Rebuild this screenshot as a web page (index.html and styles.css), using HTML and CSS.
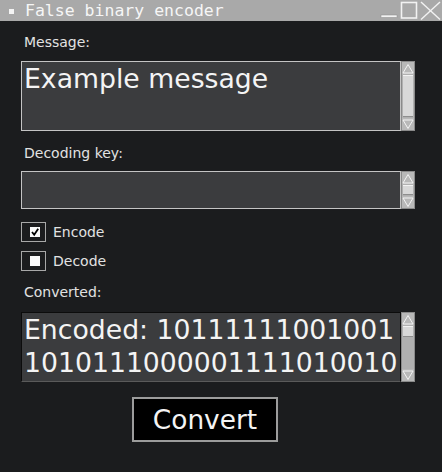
FILE: index.html
```html
<!DOCTYPE html>
<html>
<head>
<meta charset="utf-8">
<link rel="stylesheet" href="styles.css">
</head>
<body>
<div class="window">
  <div class="titlebar">
    <span class="bullet"></span>
    <span class="title">False binary encoder</span>
    <svg class="controls" width="62" height="21" viewBox="0 0 62 21">
      <rect x="1" y="15" width="16" height="2.5" fill="#f2f2f2" stroke="#8a8a8a" stroke-width="0.5"/>
      <rect x="21.5" y="2.5" width="15" height="15.5" fill="none" stroke="#f2f2f2" stroke-width="1.6"/>
      <line x1="41" y1="2" x2="60" y2="19.5" stroke="#f2f2f2" stroke-width="1.4"/>
      <line x1="60" y1="2" x2="41" y2="19.5" stroke="#f2f2f2" stroke-width="1.4"/>
    </svg>
  </div>
  <div class="content">
    <div class="label l-message">Message:</div>
    <div class="field tall">
      <div class="box light"><div class="text">Example message</div></div>
      <div class="scroll">
        <div class="arrow up"><svg width="12" height="11" viewBox="0 0 12 11"><polygon points="6,1.5 11,10 1,10" fill="none" stroke="#f4f4f4" stroke-width="1"/></svg></div>
        <div class="track"><div class="thumb full"></div></div>
        <div class="arrow down"><svg width="12" height="11" viewBox="0 0 12 11"><polygon points="1,1 11,1 6,9.5" fill="none" stroke="#f4f4f4" stroke-width="1"/></svg></div>
      </div>
    </div>
    <div class="label l-key">Decoding key:</div>
    <div class="field short">
      <div class="box light"></div>
      <div class="scroll">
        <div class="arrow up"><svg width="12" height="11" viewBox="0 0 12 11"><polygon points="6,1.5 11,10 1,10" fill="none" stroke="#f4f4f4" stroke-width="1"/></svg></div>
        <div class="track"><div class="thumb full"></div></div>
        <div class="arrow down"><svg width="12" height="11" viewBox="0 0 12 11"><polygon points="1,1 11,1 6,9.5" fill="none" stroke="#f4f4f4" stroke-width="1"/></svg></div>
      </div>
    </div>
    <div class="check c-encode">
      <div class="cbox"><span class="mark"><svg width="10" height="10" viewBox="0 0 10 10"><path d="M2 5 L4.2 7.8 L8.2 1.8" fill="none" stroke="#000" stroke-width="1.8"/></svg></span></div>
      <span class="clabel">Encode</span>
    </div>
    <div class="check c-decode">
      <div class="cbox"><span class="mark"></span></div>
      <span class="clabel">Decode</span>
    </div>
    <div class="label l-conv">Converted:</div>
    <div class="field tall">
      <div class="box dark"><div class="text">Encoded: 10111111001001<br>1010111000001111010010</div></div>
      <div class="scroll">
        <div class="arrow up"><svg width="12" height="11" viewBox="0 0 12 11"><polygon points="6,1.5 11,10 1,10" fill="none" stroke="#f4f4f4" stroke-width="1"/></svg></div>
        <div class="track"><div class="thumb small"></div></div>
        <div class="arrow down"><svg width="12" height="11" viewBox="0 0 12 11"><polygon points="1,1 11,1 6,9.5" fill="none" stroke="#f4f4f4" stroke-width="1"/></svg></div>
      </div>
    </div>
    <button class="convert">Convert</button>
  </div>
</div>
</body>
</html>
```
FILE: styles.css
```css
html, body {
  margin: 0;
  padding: 0;
  background: #1b1c1e;
}
.window {
  width: 442px;
  height: 472px;
  background: #1b1c1e;
  font-family: "DejaVu Sans", sans-serif;
  color: #e4e4e4;
  overflow: hidden;
}
.titlebar {
  height: 21px;
  background: #a9a9a9;
  display: flex;
  align-items: center;
}
.bullet {
  width: 5px;
  height: 5px;
  background: #f4f4f4;
  margin-left: 9px;
  margin-right: 11px;
  align-self: flex-start;
  margin-top: 9px;
}
.title {
  font-family: "DejaVu Sans Mono", monospace;
  font-size: 16.5px;
  color: #f6f6f6;
  white-space: nowrap;
}
.controls {
  margin-left: auto;
  display: block;
}
.content {
  padding-left: 21px;
  display: flex;
  flex-direction: column;
  align-items: flex-start;
}
.label {
  font-size: 14px;
  line-height: 16px;
  padding-left: 3px;
  color: #e2e2e2;
}
.l-message { margin-top: 13px; }
.l-key { margin-top: 14px; }
.l-conv { margin-top: 13px; }
.field {
  display: flex;
  width: 394px;
}
.field.tall { height: 70px; }
.field.short { height: 38px; }
.l-message + .field { margin-top: 11px; }
.l-key + .field { margin-top: 10px; }
.l-conv + .field { margin-top: 12px; }
.box {
  width: 380px;
  box-sizing: border-box;
  background: #3b3c3e;
  overflow: hidden;
}
.box.light { border: 1px solid #c4c4c4; }
.box.dark {
  border: 1px solid #0c0c0c;
  border-bottom-color: #5a5a5a;
}
.text {
  font-size: 26.7px;
  line-height: 33px;
  color: #f4f4f4;
  padding-left: 2px;
  white-space: nowrap;
}
.scroll {
  width: 14px;
  box-sizing: border-box;
  border: 1px solid #8a8a8a;
  background: #b3b3b3;
  display: flex;
  flex-direction: column;
}
.arrow {
  height: 12px;
  display: flex;
  justify-content: center;
  align-items: center;
  background: #b8b8b8;
  flex: none;
}
.arrow svg { display: block; }
.track {
  flex: 1;
  display: flex;
  flex-direction: column;
  background: #b0b0b0;
}
.thumb {
  background: #d8d8d8;
  border-top: 1px solid #f2f2f2;
  border-bottom: 1px solid #8e8e8e;
  box-sizing: border-box;
}
.thumb.full { flex: 1; margin: 1px 1px; }
.thumb.small { height: 11px; margin: 1px 1px 0; }
.check {
  display: flex;
  align-items: center;
  height: 20px;
}
.c-encode { margin-top: 13px; }
.c-decode { margin-top: 9px; }
.cbox {
  width: 25px;
  height: 20px;
  box-sizing: border-box;
  border: 1px solid #a8a8a8;
  display: flex;
  align-items: center;
  padding-left: 8px;
}
.mark {
  width: 10px;
  height: 10px;
  background: #fafafa;
  display: block;
}
.mark svg { display: block; }
.clabel {
  font-size: 14px;
  line-height: 16px;
  margin-left: 7px;
  color: #e2e2e2;
}
.convert {
  margin-top: 15px;
  margin-left: 111px;
  width: 146px;
  height: 45px;
  box-sizing: border-box;
  background: #000;
  border: 2px solid #9c9c9c;
  color: #f4f4f4;
  font-family: "DejaVu Sans", sans-serif;
  font-size: 26.4px;
  padding: 0;
  line-height: 30px;
}
```
